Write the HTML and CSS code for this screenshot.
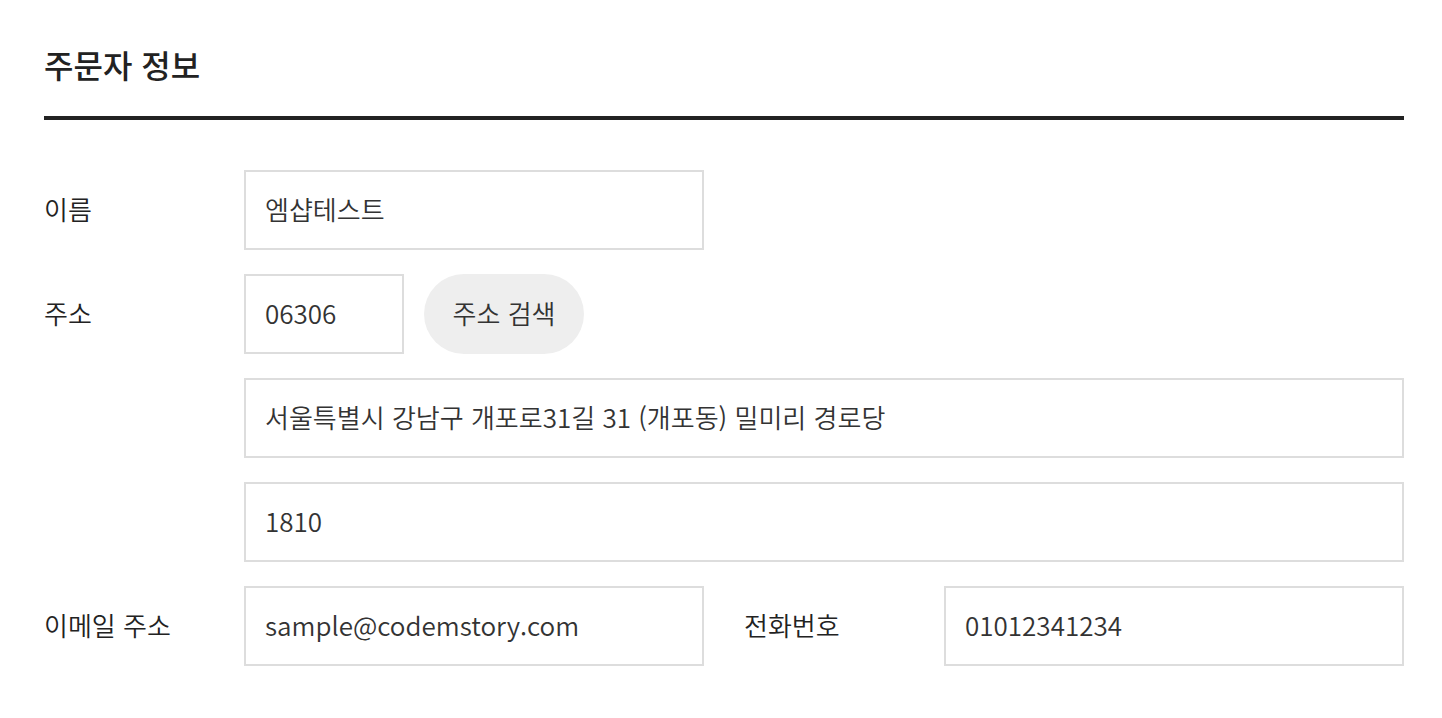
FILE: index.html
```html
<!DOCTYPE html>
<html lang="ko">
  <head>
    <meta charset="UTF-8" />
    <meta name="viewport" content="width=device-width, initial-scale=1.0"/>
    <title>주문자 정보</title>
    <link rel="stylesheet" href="styles.css">
  </head>

  <body>
    <section class="orderer">
      <h2 class="orderer-title">주문자 정보</h2>

      <form class="orderer-form">
        <div class="form-row">
          <label class="form-label" for="name">이름</label>
          <input class="form-input input-half" type="text" id="name" value="엠샵테스트" />
        </div>

        <div class="form-row">
          <label class="form-label" for="zipcode">주소</label>
          <input class="form-input input-zip" type="text" id="zipcode" value="06306" />
          <button type="button" class="btn-search">주소 검색</button>
        </div>

        <div class="form-row">
          <span class="form-label"></span>
          <input class="form-input input-full" type="text" id="address1" value="서울특별시 강남구 개포로31길 31 (개포동) 밀미리 경로당" />
        </div>

        <div class="form-row">
          <span class="form-label"></span>
          <input class="form-input input-full" type="text" id="address2" value="1810" />
        </div>

        <div class="form-row">
          <label class="form-label" for="email">이메일 주소</label>
          <input class="form-input input-half" type="text" id="email" value="sample@codemstory.com" />
          <label class="form-label label-second" for="phone">전화번호</label>
          <input class="form-input input-full" type="text" id="phone" value="01012341234" />
        </div>
      </form>
    </section>
  </body>
</html>
```

FILE: styles.css
```css
body {
  margin: 0;
  background: #fff;
  font-family: "Noto Sans CJK KR", "Noto Sans", sans-serif;
  color: #222;
}
.orderer {
  width: 1360px;
  margin-left: 44px;
  padding-top: 42px;
}
.orderer-title {
  margin: 0;
  padding-bottom: 29px;
  font-size: 32px;
  font-weight: 500;
  line-height: 45px;
  color: #222;
  border-bottom: 4px solid #222;
}
.orderer-form {
  margin-top: 50px;
  display: flex;
  flex-direction: column;
  gap: 24px;
}
.form-row {
  display: flex;
  align-items: center;
}
.form-label {
  flex: 0 0 200px;
  padding-bottom: 4px;
  font-size: 26px;
  font-weight: 350;
  color: #222;
}
.label-second {
  margin-left: 40px;
}
.form-input {
  box-sizing: border-box;
  height: 80px;
  padding: 0 20px 4px 19px;
  border: 2px solid #ddd;
  border-radius: 0;
  font-family: inherit;
  font-size: 26px;
  font-weight: 350;
  color: #333;
  background: #fff;
  outline: none;
}
.input-half {
  width: 460px;
}
.input-zip {
  width: 160px;
}
.input-full {
  flex: 1;
  min-width: 0;
}
.btn-search {
  width: 160px;
  height: 80px;
  margin-left: 20px;
  padding: 0 0 4px;
  border: none;
  border-radius: 40px;
  background: #eee;
  font-family: inherit;
  font-size: 26px;
  font-weight: 350;
  color: #333;
  cursor: pointer;
}
```
